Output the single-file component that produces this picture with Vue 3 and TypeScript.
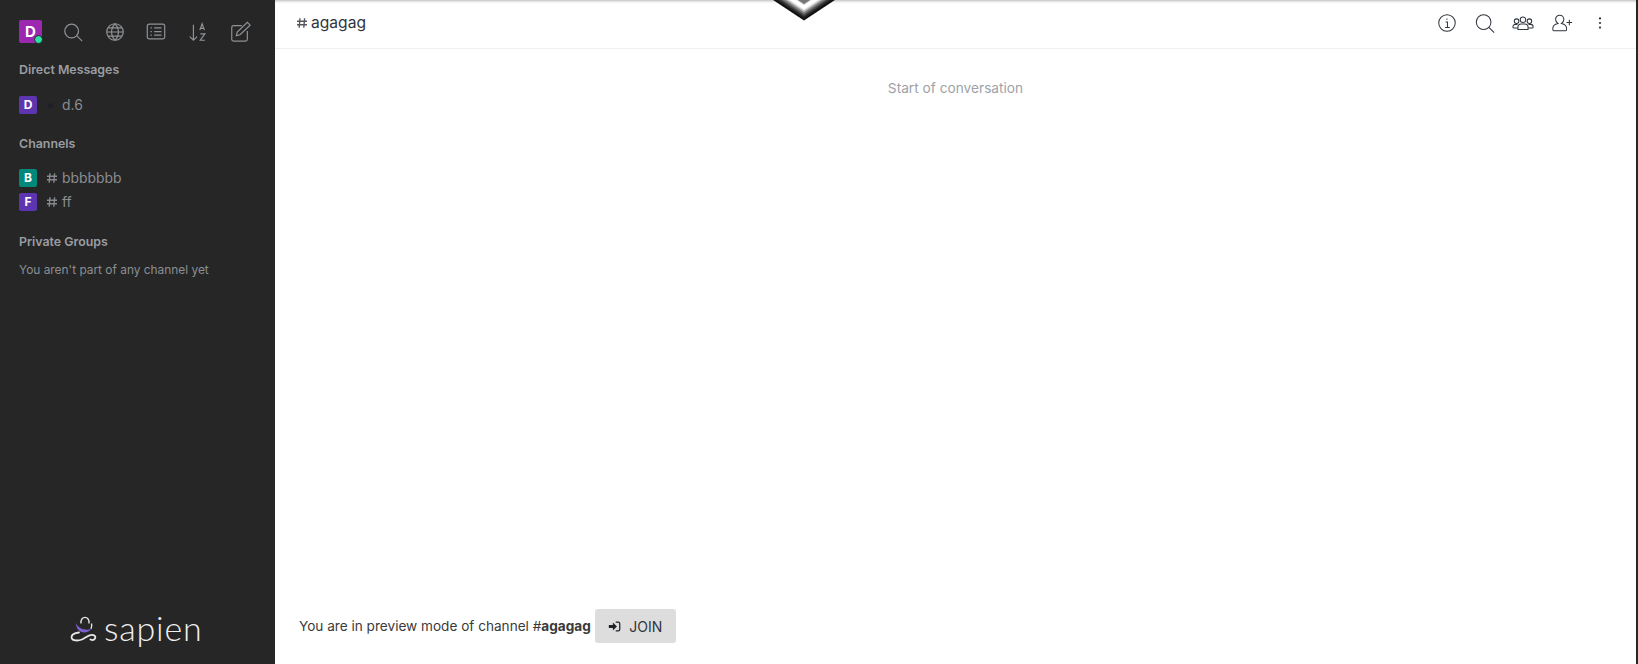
<template>
  <div class="app">
    <aside class="sidebar">
      <div class="toolbar">
        <div class="me">
          D
          <span class="online"></span>
        </div>
        <svg v-for="icon in sidebarIcons" :key="icon.name" class="tool" viewBox="0 0 24 24">
          <path v-for="d in icon.paths" :key="d" :d="d" />
        </svg>
      </div>

      <h4 class="section-title first">Direct Messages</h4>
      <div class="room">
        <span class="room-avatar purple">D</span>
        <span class="status-dot"></span>
        <span class="room-name">d.6</span>
      </div>

      <h4 class="section-title channels">Channels</h4>
      <div v-for="ch in channels" :key="ch.name" class="room channel">
        <span class="room-avatar" :class="ch.color">{{ ch.letter }}</span>
        <svg class="hash" viewBox="0 0 12 12">
          <path d="M4 1.2 3.2 10.8M8.6 1.2 7.8 10.8M1 4.2h10M1 7.8h10" />
        </svg>
        <span class="room-name">{{ ch.name }}</span>
      </div>

      <h4 class="section-title groups">Private Groups</h4>
      <p class="empty">You aren't part of any channel yet</p>

      <div class="brand">
        <svg class="brand-mark" viewBox="0 0 28 28">
          <path class="mark-ring" d="M6 9C6 15 10 18.5 14 18.5 17 18.5 20 17 21 15 17 16.5 9 16 6 9z" />
          <path class="mark-top" d="M11 9.5C10.5 5 13 3.3 15 3.3 17 3.3 19.5 5 19 9.5M21.5 9.5C22 11.5 21.7 13.5 21 15" />
          <path class="mark-line" d="M9 18.5C4 19 1 21 1.7 24 2.5 27 8 27 12 25.5 15 24.3 18 21 21.5 20.8 24.5 20.7 26 22.5 25 24.5 24 26.2 22 26.3 20.5 25.5" />
        </svg>
        <span class="brand-name">sapien</span>
      </div>
    </aside>

    <main class="main">
      <header class="header">
        <div class="title">
          <svg class="title-hash" viewBox="0 0 12 12">
            <path d="M4 1.2 3.2 10.8M8.6 1.2 7.8 10.8M1 4.2h10M1 7.8h10" />
          </svg>
          <span>agagag</span>
        </div>
        <div class="actions">
          <svg v-for="icon in headerIcons" :key="icon.name" class="action" viewBox="0 0 24 24">
            <path v-for="d in icon.paths" :key="d" :d="d" />
          </svg>
          <svg class="action kebab" viewBox="0 0 24 24">
            <circle cx="12" cy="7" r="1.2" />
            <circle cx="12" cy="12" r="1.2" />
            <circle cx="12" cy="17" r="1.2" />
          </svg>
        </div>
      </header>

      <div class="messages">
        <p class="start">Start of conversation</p>
      </div>

      <footer class="preview">
        <span>You are in preview mode of channel #<b>agagag</b></span>
        <button class="join" type="button">
          <svg class="join-icon" viewBox="0 0 16 16">
            <path d="M1 6.2h5V3l5 5-5 5V9.8H1z" />
            <path class="join-door" d="M9.5 2.5h3a2 2 0 0 1 2 2v7a2 2 0 0 1-2 2h-3" />
          </svg>
          JOIN
        </button>
      </footer>
    </main>

    <svg class="chevron" viewBox="0 0 68 24">
      <defs>
        <filter id="soft" x="-10%" y="-10%" width="120%" height="120%">
          <feGaussianBlur stdDeviation="0.5" />
        </filter>
      </defs>
      <g filter="url(#soft)">
        <polygon v-for="band in chevronBands" :key="band.tip" :points="bandPoints(band.tip)" :fill="band.fill" />
      </g>
    </svg>
  </div>
</template>

<script setup lang="ts">
type Icon = { name: string; paths: string[] }

const sidebarIcons: Icon[] = [
  { name: 'search', paths: ['M10.5 3.5a7.5 7.5 0 1 0 0 15 7.5 7.5 0 0 0 0-15z', 'M16 16l6 6'] },
  {
    name: 'globe',
    paths: [
      'M12 3a9 9 0 1 0 0 18 9 9 0 0 0 0-18z',
      'M12 3c-5 5-5 13 0 18M12 3c5 5 5 13 0 18',
      'M3 12h18M4.3 7.5h15.4M4.3 16.5h15.4'
    ]
  },
  {
    name: 'list',
    paths: [
      'M4.5 3.5h15a2 2 0 0 1 2 2v12a2 2 0 0 1-2 2h-15a2 2 0 0 1-2-2v-12a2 2 0 0 1 2-2z',
      'M6 7.5h1.5M6 11.5h1.5M6 15.5h1.5M10 7.5h8M10 11.5h8M10 15.5h8'
    ]
  },
  {
    name: 'sort',
    paths: ['M7 4v17M3 17l4 4 4-4', 'M14 10l2.5-7 2.5 7M15 8h3', 'M14.5 14h5l-5 7h5']
  },
  {
    name: 'compose',
    paths: [
      'M14 5H5a2 2 0 0 0-2 2v13a2 2 0 0 0 2 2h13a2 2 0 0 0 2-2v-9',
      'M8 16l1-4L20 1.5l3 3L12 15z'
    ]
  }
]

const headerIcons: Icon[] = [
  {
    name: 'info',
    paths: ['M12 3a9 9 0 1 0 0 18 9 9 0 0 0 0-18z', 'M10.5 11h2v6M10 17h5M12 7.2v1.3']
  },
  { name: 'search', paths: ['M10.5 3a8 8 0 1 0 0 16 8 8 0 0 0 0-16z', 'M16 16.5l6 6'] },
  {
    name: 'team',
    paths: [
      'M12 5.5a3 3 0 1 0 0 6 3 3 0 0 0 0-6z',
      'M6.5 19v-2.5a3.5 3.5 0 0 1 3.5-3.5h4a3.5 3.5 0 0 1 3.5 3.5V19z',
      'M5 7.5a2.5 2.5 0 1 0 0 5 2.5 2.5 0 0 0 0-5zM19 7.5a2.5 2.5 0 1 0 0 5 2.5 2.5 0 0 0 0-5z',
      'M6.5 17.5H2c-.6 0-1-.4-1-1V16a2.5 2.5 0 0 1 2.5-2.5H6M17.5 17.5H22c.6 0 1-.4 1-1V16a2.5 2.5 0 0 0-2.5-2.5H18'
    ]
  },
  {
    name: 'add-user',
    paths: [
      'M9.5 3.5A4.5 4.5 0 0 0 5 8c0 2 1 3.5 2.5 4.5-3 .6-5.5 2.5-5.5 5.5v1a1.5 1.5 0 0 0 1.5 1.5h12A1.5 1.5 0 0 0 17 19v-1c0-3-2.5-4.9-5.5-5.5C13 11.5 14 10 14 8a4.5 4.5 0 0 0-4.5-4.5z',
      'M20 8.5v6M17 11.5h6'
    ]
  }
]

const channels = [
  { name: 'bbbbbbb', letter: 'B', color: 'teal' },
  { name: 'ff', letter: 'F', color: 'purple' }
]

// stacked V bands, from the dark outer edge down to the inner diamond
const chevronBands = [
  { tip: 20.6, fill: '#111' },
  { tip: 18.5, fill: '#222' },
  { tip: 16.5, fill: '#444' },
  { tip: 14.5, fill: '#777' },
  { tip: 12.5, fill: '#aaa' },
  { tip: 11, fill: '#ddd' },
  { tip: 9.5, fill: '#fff' },
  { tip: 5, fill: '#ccc' },
  { tip: 4, fill: '#777' }
]

const bandPoints = (tip: number): string => {
  const half = tip * 1.5
  return `${34 - half},0 ${34 + half},0 34,${tip}`
}
</script>

<style scoped>
.app {
  position: relative;
  display: flex;
  width: 1638px;
  height: 664px;
  overflow: hidden;
  font-family: Inter, "Liberation Sans", sans-serif;
  background: #fff;
}

.sidebar {
  display: flex;
  flex-direction: column;
  flex: 0 0 275px;
  box-sizing: border-box;
  padding: 20px 0 0 19px;
  background: #262626;
  color: #9ea2a8;
}

.toolbar {
  display: flex;
  align-items: center;
  height: 23px;
}

.me {
  position: relative;
  flex: 0 0 23px;
  height: 23px;
  margin-right: 20px;
  border-radius: 2px;
  background: #9c27b0;
  color: #fff;
  font-size: 15px;
  font-weight: 700;
  line-height: 23px;
  text-align: center;
}

.online {
  position: absolute;
  right: -1px;
  bottom: -1px;
  width: 7px;
  height: 7px;
  border: 1px solid #262626;
  border-radius: 50%;
  background: #2de0a5;
}

.tool {
  width: 22px;
  height: 22px;
  margin-right: 19.7px;
  fill: none;
  stroke: #8f9296;
  stroke-width: 1.3;
}

.section-title {
  margin: 0;
  font-size: 12.4px;
  font-weight: 600;
  line-height: 16px;
  color: #9a9da2;
}

.first {
  margin-top: 19px;
}

.channels {
  margin-top: 22px;
}

.groups {
  margin-top: 23px;
}

.room {
  display: flex;
  align-items: center;
  height: 18px;
  margin-top: 18px;
}

.channel {
  margin-top: 6px;
}

.section-title.channels + .channel {
  margin-top: 17px;
}

.room-avatar {
  flex: 0 0 18px;
  height: 18px;
  border-radius: 2px;
  color: #fff;
  font-size: 12px;
  font-weight: 700;
  line-height: 18px;
  text-align: center;
}

.purple {
  background: #5e35b1;
}

.teal {
  background: #00897b;
}

.status-dot {
  width: 5px;
  height: 5px;
  margin: 0 9px 0 11px;
  border-radius: 50%;
  background: #1d2025;
}

.hash {
  width: 12px;
  height: 12px;
  margin: 0 4px 0 9px;
  fill: none;
  stroke: #85888c;
  stroke-width: 1.4;
}

.room-name {
  font-size: 13.9px;
  color: #8b8e92;
}

.empty {
  margin: 12px 0 0;
  font-size: 11.9px;
  line-height: 16px;
  color: #8b8e92;
}

.brand {
  display: flex;
  align-items: center;
  margin: auto 0 20px 51px;
}

.brand-mark {
  width: 28px;
  height: 28px;
  margin-right: 6px;
  fill: none;
}

.mark-top {
  stroke: #e8e8e8;
  stroke-width: 1.3;
}

.mark-ring {
  fill: #7e5fd0;
}

.mark-line {
  stroke: #e8e8e8;
  stroke-width: 1.8;
  stroke-linecap: round;
}

.brand-name {
  font-family: Lato, "Liberation Sans", sans-serif;
  font-size: 34px;
  font-weight: 300;
  line-height: 32px;
  letter-spacing: 0.8px;
  color: #f0f0f0;
}

.main {
  display: flex;
  flex: 1;
  flex-direction: column;
  min-width: 0;
  border-right: 2px solid #262626;
}

.header {
  display: flex;
  align-items: center;
  justify-content: space-between;
  box-sizing: border-box;
  height: 49px;
  padding: 0 25px 3px 21px;
  border-bottom: 1px solid #f0f0f0;
  box-shadow: inset 0 3px 3px -2px #b5b5b5;
}

.title {
  display: flex;
  align-items: center;
  font-size: 15.6px;
  color: #2f343d;
}

.title-hash {
  width: 12px;
  height: 12px;
  margin-right: 3px;
  fill: none;
  stroke: #54585e;
  stroke-width: 1.4;
}

.actions {
  display: flex;
  align-items: center;
  gap: 16.3px;
}

.action {
  width: 22px;
  height: 22px;
  fill: none;
  stroke: #2f343d;
  stroke-width: 1.1;
}

.kebab {
  fill: #2f343d;
  stroke: none;
}

.messages {
  flex: 1;
}

.start {
  margin: 30px 0 0;
  font-size: 13.7px;
  line-height: 18px;
  text-align: center;
  color: #9ea2a8;
}

.preview {
  display: flex;
  align-items: center;
  gap: 4px;
  padding: 0 0 21px 24px;
  font-size: 13.6px;
  color: #3a3a3a;
}

.preview b {
  font-weight: 700;
}

.join {
  display: flex;
  align-items: center;
  justify-content: center;
  gap: 8px;
  width: 81px;
  height: 34px;
  padding: 0;
  border: 0;
  border-radius: 3px;
  background: #dddddd;
  color: #2f343d;
  font-family: inherit;
  font-size: 14px;
}

.join-icon {
  width: 13px;
  height: 13px;
  fill: #1f2329;
}

.join-door {
  fill: none;
  stroke: #1f2329;
  stroke-width: 1.5;
}

.chevron {
  position: absolute;
  top: 0;
  left: 770px;
  width: 68px;
  height: 24px;
}
</style>

<style>
body {
  margin: 0;
}
</style>
